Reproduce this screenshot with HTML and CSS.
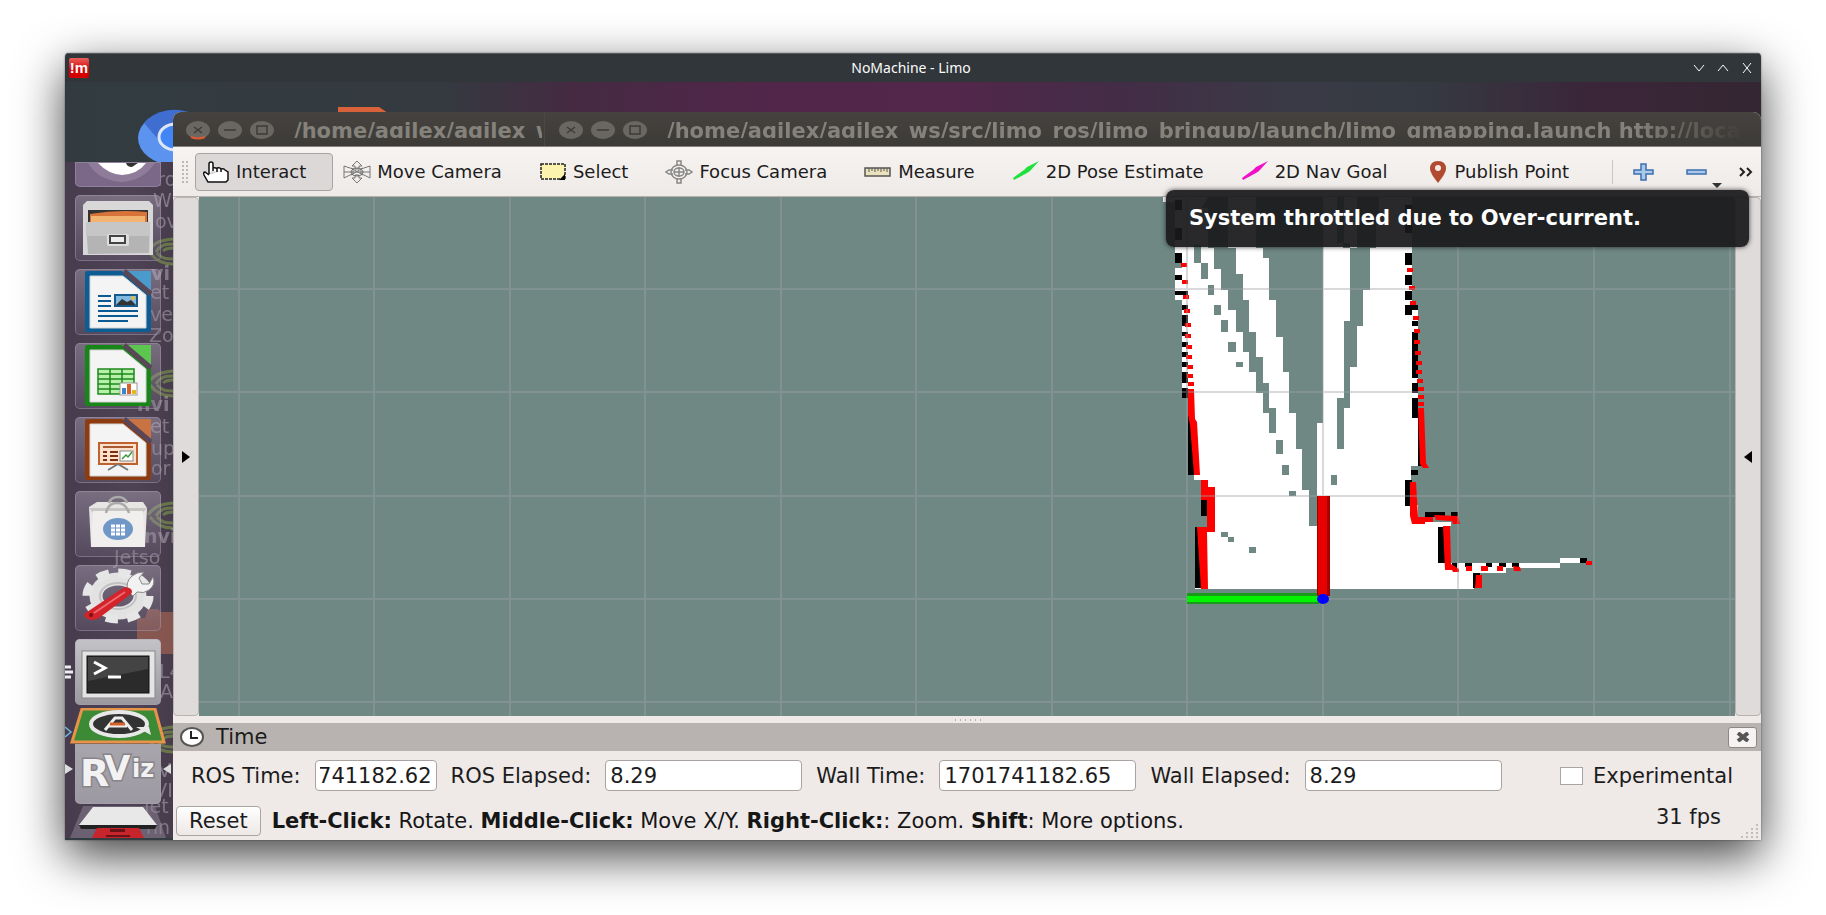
FILE: index.html
```html
<!DOCTYPE html>
<html lang="en">
<head>
<meta charset="utf-8">
<title>NoMachine - Limo</title>
<link rel="stylesheet" href="styles.css">
</head>
<body>
<main class="window">
  <header class="titlebar">
    <span class="logo">!m</span>
    <h1 class="titlebar-text">NoMachine - Limo</h1>
    <div class="controls">
      <button class="control" aria-label="Minimize"><svg width="12" height="12"><path d="M1 3l5 6 5-6"/></svg></button>
      <button class="control" aria-label="Maximize"><svg width="12" height="12"><path d="M1 9l5-6 5 6"/></svg></button>
      <button class="control" aria-label="Close"><svg width="12" height="12"><path d="M2 1l8 10M10 1L2 11"/></svg></button>
    </div>
  </header>

  <div class="desktop">
    <svg class="desktop-icons" width="340" height="80" viewBox="65 82 340 80" aria-hidden="true">
      <ellipse cx="174" cy="138" rx="36" ry="27" fill="#5b93ee"/>
      <path d="M144 123a36 27 0 0 1 50-9l-8 10-22 22z" fill="#3f6dd0"/>
      <ellipse cx="176" cy="137" rx="17" ry="13" fill="#4285f4" stroke="#dce6f5" stroke-width="3"/>
      <path d="M338 107h41l9 6h-50z" fill="#d9623a"/>
    </svg>

    <nav class="launcher" aria-label="Launcher">
      <svg class="ghosts" width="108" height="676" viewBox="65 162 108 676" aria-hidden="true">
        <g id="eye" fill="none" stroke="#7f9b4c" stroke-width="3" opacity=".6">
          <path id="nv" d="M148 251c6-9 14-11 25-12M150 253c6 8 14 11 23 11M156 252c4-7 9-8 17-8M157 253c5 6 10 6 16 6M163 251c3-3 6-3 10-3"/>
          <use href="#nv" y="132"/><use href="#nv" y="264"/><use href="#nv" y="488"/>
        </g>
        <path d="M137 618v36h36v-42h-12l-3-3h-10l-3 9z" fill="#a86450" opacity=".65"/>
        <g class="ghost-text">
          <text x="132" y="186">Chro</text><text x="153" y="207">W</text><text x="155" y="228">ov</text>
          <text x="151" y="280" font-weight="bold">vi</text><text x="150" y="299">et</text><text x="150" y="321">ve</text><text x="149" y="342">Zo</text>
          <text x="137" y="411" font-weight="bold">nvi</text><text x="150" y="433">et</text><text x="151" y="455">up</text><text x="151" y="475">or</text>
          <text x="144" y="543" font-weight="bold">nvi</text><text x="114" y="564">Jetso</text><text x="159" y="678">L4</text><text x="160" y="698">A</text>
          <text x="158" y="777">VI</text><text x="140" y="797">NVI</text><text x="144" y="813">Jet</text><text x="146" y="834">nn</text>
        </g>
      </svg>
      <button class="launch launch-top" aria-label="Dash"><svg width="86" height="23" viewBox="75 162 86 23"><path d="M88 162q10 17 33 19 22-1 34-19z" fill="#8f7c9a"/><path d="M98 162q10 11 24 12 16-1 24-12z" fill="#fff"/><path d="M126 162q1 4 6 4l6-4z" fill="#333"/></svg></button>
      <button class="launch" aria-label="Files"><svg width="86" height="66" viewBox="75 194 86 66">
        <path d="M83 204l4-4h62l4 4v50h-70z" fill="#d8d8d8"/><path d="M88 209h60v14H88z" fill="#333"/><path d="M90 213q28-5 57-2v11H90z" fill="#d8733a"/><path d="M91 215h54v7H91z" fill="#f2b472"/>
        <path d="M86 221h64l-1 31-61 1z" fill="#b4b4b4"/><path d="M86 221h64v14H86z" fill="#c6c6c6"/><rect x="107" y="233" width="22" height="12" rx="2" fill="#ddd"/><rect x="110" y="235" width="15" height="7" fill="#eee" stroke="#444" stroke-width="2"/></svg></button>
      <button class="launch" aria-label="Writer"><svg width="86" height="66" viewBox="75 268 86 66">
        <rect x="85" y="270" width="66" height="61" rx="2" fill="#0d5c93"/><path d="M122 270h29v23z" fill="#4a9acb"/><path d="M124 270l27 23" stroke="#594657" stroke-width="5"/>
        <path d="M90 275h33l23 19v33H90z" fill="#f4f4f4" stroke="#d2d2d2"/>
        <path d="M98 295h13M98 300h13M98 305h13M98 310h40M98 315h40M98 320h30" stroke="#0b5a91" stroke-width="2"/><rect x="115" y="294" width="22" height="11" fill="#7fb9e2" stroke="#155a8b" stroke-width="2"/><path d="M116 304l6-6 5 3 4-2 5 5z" fill="#333"/><circle cx="133" cy="297" r="2" fill="#e9b83d"/></svg></button>
      <button class="launch" aria-label="Calc"><svg width="86" height="66" viewBox="75 343 86 66">
        <rect x="85" y="345" width="66" height="61" rx="2" fill="#188518"/><path d="M122 345h29v23z" fill="#5cc650"/><path d="M124 345l27 23" stroke="#594657" stroke-width="5"/>
        <path d="M90 350h33l23 19v33H90z" fill="#f4f4f4" stroke="#d2d2d2"/>
        <path d="M98 369h36v25H98zM98 374h36M98 379h36M98 384h36M98 389h36M110 369v25M122 369v25" fill="#b8efa9" stroke="#1b8a1b" stroke-width="1.5"/><rect x="120" y="383" width="17" height="12" fill="#fff" stroke="#999"/><path d="M122 388h4v6h-4z" fill="#3a86c8"/><path d="M127 384h4v10h-4z" fill="#d8612a"/><path d="M132 390h4v4h-4z" fill="#e9b520"/></svg></button>
      <button class="launch" aria-label="Impress"><svg width="86" height="66" viewBox="75 417 86 66">
        <rect x="85" y="419" width="66" height="61" rx="2" fill="#8f3b10"/><path d="M122 419h29v23z" fill="#c97343"/><path d="M124 419l27 23" stroke="#594657" stroke-width="5"/>
        <path d="M90 424h33l23 19v33H90z" fill="#f4f4f4" stroke="#d2d2d2"/>
        <rect x="99" y="443" width="38" height="21" fill="#fbe0cc" stroke="#c0622d" stroke-width="2"/><path d="M103 447h30" stroke="#a85a30" stroke-width="2"/><path d="M103 452h4M103 456h4M103 460h4M110 452h8M110 456h8M110 460h8" stroke="#7a3010" stroke-width="2"/><rect x="120" y="451" width="13" height="10" fill="#fff" stroke="#888"/><path d="M122 459l4-4 2 2 4-5" fill="none" stroke="#3a9a3a" stroke-width="1.5"/><path d="M118 464l-10 6M118 464l10 6" stroke="#777" stroke-width="2"/></svg></button>
      <button class="launch" aria-label="Software"><svg width="86" height="66" viewBox="75 491 86 66">
        <path d="M89 507l8-5h46l4 6-2 39H91z" fill="#e8e6e4"/><path d="M89 508h58l-4 5H93z" fill="#c9c6c4"/><path d="M91 547l2-36h50l2 36z" fill="#f0efed"/><path d="M106 513q2-10 11-10t12 10M109 503q2-6 9-6t9 6" fill="none" stroke="#aaa" stroke-width="2.5"/><ellipse cx="118" cy="529" rx="15" ry="11" fill="#6f97c8"/><path d="M111 526h14M111 530h14M111 534h14" stroke="#fff" stroke-width="3" stroke-dasharray="4 1"/></svg></button>
      <button class="launch" aria-label="Settings"><svg width="86" height="66" viewBox="75 566 86 66">
        <ellipse cx="118" cy="597" rx="22" ry="17" fill="none" stroke="#e2e2e2" stroke-width="13"/><ellipse cx="118" cy="597" rx="31" ry="23" fill="none" stroke="#e6e6e6" stroke-width="9" stroke-dasharray="12 9.300"/><ellipse cx="118" cy="597" rx="18" ry="13" fill="none" stroke="#c2c2c2" stroke-width="2"/>
        <path d="M128 592q-3-9 4-15 5-4 12-4l-5 6 3 6h7l4-7q3 8-4 13-5 4-12 2l-4 4z" fill="#f2f2f2" stroke="#888"/><path d="M87 613l36-24q4-2 8 1 2 3 0 5l-32 24q-7 4-13 0-4-4 1-6z" fill="#d3232b"/><path d="M94 614l31-21" stroke="#ee6a6e" stroke-width="2"/><circle cx="91" cy="616" r="2" fill="#7a1014"/></svg></button>
      <button class="launch launch-lit" aria-label="Terminal"><svg width="86" height="66" viewBox="75 640 86 66">
        <rect x="82" y="652" width="73" height="47" fill="#e4e4e4" stroke="#888"/><rect x="87" y="657" width="62" height="37" fill="#2b2b2b" stroke="#111"/><path d="M88 658h60v12l-60 12z" fill="#444"/><path d="M94 663l11 6-11 6" fill="none" stroke="#fff" stroke-width="3"/><path d="M108 678h13" stroke="#fff" stroke-width="3"/></svg></button>
      <button class="launch launch-fold" aria-label="Updater"><svg width="96" height="36" viewBox="70 708 96 36">
        <path d="M82 709h73l9 33H72z" fill="#3c8a35" stroke="#e8934a" stroke-width="3"/><ellipse cx="119" cy="724" rx="28" ry="12" fill="#333" stroke="#e8e8e8" stroke-width="4"/><path d="M105 730l10-12h7l10 12M108 726h19" fill="none" stroke="#eee" stroke-width="3"/><path d="M110 724h15" stroke="#d8612a" stroke-width="3"/><path d="M136 727l13 0 2 8z" fill="#e8e8e8"/></svg></button>
      <button class="launch launch-rviz" aria-label="RViz">
        <svg width="86" height="60" viewBox="75 743 86 60"><g class="rviz-word"><text x="80" y="785" font-size="38">R</text><text x="104" y="779" font-size="34">V</text><text x="132" y="776" font-size="24">iz</text></g></svg></button>
      <button class="launch launch-last" aria-label="Devices"><svg width="96" height="34" viewBox="70 804 96 34">
        <path d="M83 806h72l11 32H70z" fill="#8d8494" opacity=".5"/><path d="M93 807h50l14 18H79z" fill="#e8e8e8"/><path d="M79 825h78l-2 4H81z" fill="#222"/><path d="M97 828h42l5 10H92z" fill="#c8242b"/><path d="M110 829h15v3h-15zM106 835h24v2h-24z" fill="#6b1216"/></svg></button>
      <svg class="pips" width="108" height="130" viewBox="65 660 108 130" aria-hidden="true"><path d="M65 667h6M65 672h8M65 677h6" stroke="#eee" stroke-width="3"/><path d="M65 727l6 5-6 5" fill="none" stroke="#6fb6dd" stroke-width="1.500"/><path d="M65 764l8 5-8 5zM171 764l-8 5 8 5z" fill="#ddd"/></svg>
    </nav>

    <section class="rviz">
      <header class="rviz-titles">
        <div class="rviz-tab rviz-tab-back">
          <svg width="90" height="20" class="dots"><use href="#winbtns"/><path d="M5 17q7 3 14 0" stroke="#dd5a30" stroke-width="2" fill="none"/></svg>
          <span class="rviz-path">/home/agilex/agilex_ws/src</span>
        </div>
        <div class="rviz-tab rviz-tab-front">
          <svg width="90" height="20" class="dots"><g id="winbtns"><g fill="#6a6762"><ellipse cx="12" cy="10" rx="12" ry="9"/><ellipse cx="44" cy="10" rx="12" ry="9"/><ellipse cx="76" cy="10" rx="12" ry="9"/></g><path d="M8 7l8 6M16 7l-8 6M38 10h12M71 6h10v8h-10z" stroke="#3d3b38" stroke-width="1.500" fill="none"/></g></svg>
          <span class="rviz-path">/home/agilex/agilex_ws/src/limo_ros/limo_bringup/launch/limo_gmapping.launch http://localhost</span>
        </div>
      </header>

      <div class="toolbar">
        <span class="grip"></span>
        <button class="tool tool-on"><svg width="28" height="24"><path d="M7 14V4q0-2 2-2t2 2v6M11 11V8q3-1 4 1v3M15 11V8q3-1 4 1v3M19 11V9q3-1 4 1l3 2v8l-2 2H6l-4-7q-1-3 1-3l4 3" fill="#fff" stroke="#111" stroke-width="1.500"/></svg>Interact</button>
        <button class="tool"><svg width="28" height="24"><path d="M14 1l5 5h-3v3h-4V6H9zM14 23l5-5h-3v-3h-4v3H9zM1 6l6 2 3 1v5l-3 1-6 3V6zM27 6l-6 2-3 1v5l3 1 6 3V6zM1 12h26M8 8l12 7M8 15l12-7" fill="none" stroke="#777"/><ellipse cx="14" cy="12" rx="6" ry="4" fill="none" stroke="#666"/></svg>Move Camera</button>
        <button class="tool"><svg width="28" height="24"><rect x="2" y="4" width="24" height="15" fill="#fbf3ae" stroke="#222" stroke-width="1.500" stroke-dasharray="3 1"/><path d="M26 14v6h-6z"/></svg>Select</button>
        <button class="tool"><svg width="28" height="24" fill="none" stroke="#888" stroke-width="1.500"><path d="M12 6V1h4v5M12 18v5h4v-5M8 10H4l-3 2 3 2h4M20 10h4l3 2-3 2h-4"/><ellipse cx="14" cy="12" rx="8" ry="7"/><ellipse cx="14" cy="12" rx="5" ry="4"/><path d="M9 12h10M14 7v10"/></svg>Focus Camera</button>
        <button class="tool"><svg width="28" height="24"><rect x="1" y="8" width="25" height="8" fill="#e9e2bc" stroke="#555" stroke-width="1.500"/><path d="M5 8v4M8 8v3M11 8v4M14 8v3M17 8v4M20 8v3M23 8v4" stroke="#555"/></svg>Measure</button>
        <button class="tool"><svg width="28" height="24" fill="#1fe03c"><path d="M1 18l11-8 3-3 12-6-9 10-3 2-13 7z"/></svg>2D Pose Estimate</button>
        <button class="tool"><svg width="28" height="24" fill="#f010c8"><path d="M1 18l11-8 3-3 12-6-9 10-3 2-13 7z"/></svg>2D Nav Goal</button>
        <button class="tool tool-pin"><svg width="24" height="24"><path d="M13 1q8 0 8 8 0 4-8 14Q5 13 5 9q0-8 8-8z" fill="#b04a30"/><circle cx="13" cy="8" r="3" fill="#f6e9e4"/></svg>Publish Point</button>
        <div class="tool-end">
          <button class="mini" aria-label="Add tool"><svg width="22" height="20"><path d="M8 2h5v6h7v4h-7v6H8v-6H1V8h7z" fill="#a9c8ea" stroke="#3c6fae" stroke-width="1.500"/></svg></button>
          <button class="mini mini-menu" aria-label="Remove tool"><svg width="22" height="20"><path d="M1 8h19v4H1z" fill="#a9c8ea" stroke="#3c6fae" stroke-width="1.500"/></svg></button>
          <button class="mini mini-more" aria-label="More tools"><svg width="14" height="12"><path d="M1 2l4 4-4 4M8 2l4 4-4 4" fill="none" stroke="#222" stroke-width="2"/></svg></button>
        </div>
      </div>

      <div class="view">
        <button class="handle" aria-label="Toggle left panel"><svg width="10" height="12"><path d="M1 0l8 6-8 6z"/></svg></button>
        <svg class="map" viewBox="199 197 1536 519" preserveAspectRatio="xMidYMid slice" role="img" aria-label="Occupancy map">
          <path fill="#fff" d="M1163 197h249v108h6v161h-7v39h7v17h33v4h-6v37h61v10h-32v16H1195v-62h6v-47h-7v-5h-6v-77h-6v-98h-7v-53h-12zM1500 563h60v-5h22v5h-22v5h-60z"/>
          <g fill="#6f8884">
            <path d="M1163 202h12v96h-12zM1175 263h7v5h-7z"/>
            <path d="M1256 197v51h7v10h6v42h7v37h7v35h6v41h7v36h6v41h7v36h8V423h6V197z"/>
            <path d="M1208 197h20v51h8v26h7v26h6v32h7v25h7v26h6v25h7v25h-7v-20h-6v-20h-7v-21h-7v-20h-6v-20h-7v-22h-8v-20h-7v-21h-7v-21h-6v-40h-6z"/>
            <path d="M1350 248h-7v-5h-6v-46h7v46h6zM1357 197h22v23h-3v28h-6v42h-7v36h-6v41h-7v41h-6v41h-7v-51h7v-77h6v-73h7z"/>
            <path d="M1194 245h7v18h-7zM1201 263h7v16h-7zM1208 285h6v10h-6zM1214 305h7v10h-7zM1221 320h7v12h-7zM1228 342h8v10h-8zM1236 362h7v5h-7zM1276 440h7v14h-7zM1282 465h7v10h-7zM1289 491h7v5h-7zM1331 475h6v10h-6zM1221 532h7v5h-7zM1228 537h6v5h-6zM1249 547h7v6h-7z"/>
            <path d="M1418 305v-5h20v5zM1201 516h7v11h-7z"/>
          </g>
          <path fill="#000" d="M1175 200h7v10h-7zM1175 228h7v12h-7zM1175 253h7v10h-7zM1175 275h7v5h-7zM1175 291h13v4h-13zM1182 305h6v5h-6zM1182 315h6v11h-6zM1182 332h6v4h-6zM1182 342h6v5h-6zM1182 352h6v5h-6zM1182 362h6v5h-6zM1182 372h6v11h-6zM1182 388h6v10h-6zM1188 414h6v61h-6zM1201 484h7v32h-7zM1195 527h6v61h-6z
            M1405 205h7v28h-7zM1405 253h7v12h-7zM1405 275h7v10h-7zM1405 291h7v9h-7zM1405 305h13v5h-6v5h-7zM1412 321h6v5h-6zM1412 332h6v46h-6zM1412 383h6v10h-6zM1412 398h6v20h-6zM1418 412h4v54h-4zM1411 470h7v5h-7zM1405 480h7v26h-7zM1425 512h20v5h-20zM1451 512h7v5h-7zM1438 527h7v36h-7zM1452 563h5v5h-5zM1465 563h7v4h-7zM1486 563h6v4h-6zM1499 563h7v4h-7zM1512 563h7v4h-7zM1473 573h7v15h-7zM1580 558h7v5h-7z"/>
          <g fill="#f00">
            <path id="dot" d="M1181 263h6v4h-6z"/><use href="#dot" x="1" y="17"/><use href="#dot" x="2" y="32"/><use href="#dot" x="3" y="46"/><use href="#dot" x="4" y="60"/><use href="#dot" x="4" y="71"/><use href="#dot" x="5" y="82"/><use href="#dot" x="5" y="92"/><use href="#dot" x="6" y="102"/><use href="#dot" x="6" y="111"/><use href="#dot" x="7" y="119"/>
            <use href="#dot" x="226" y="5"/><use href="#dot" x="228" y="23"/><use href="#dot" x="229" y="38"/><use href="#dot" x="232" y="53"/><use href="#dot" x="233" y="66"/><use href="#dot" x="233" y="77"/><use href="#dot" x="234" y="88"/><use href="#dot" x="235" y="98"/><use href="#dot" x="235" y="107"/><use href="#dot" x="236" y="116"/><use href="#dot" x="237" y="124"/><use href="#dot" x="237" y="132"/><use href="#dot" x="237" y="139"/>
            <path d="M1188 389h6l1 30 2 3 3 53h-6l-4-50-2-10zM1201 480h7v7h7v45h-8l1 57h-7l-4-62h10v-27h-6v-15zM1418 408h6l2 55 3 5h-6l-3-4zM1410 482h6l2 35h15v5h-8v2h-13l-2-8zM1434 515l24 1 2 8h-7l-1-3-16-1zM1443 526h7l1 38 8 5v3h-6l-1-2h-7zM1466 566h6v5h-6zM1481 566h7v5h-7zM1497 566h6v5h-6zM1513 566l7 1 1 4h-7zM1476 575h6v13h-7zM1586 561h6v4h-6z"/>
          </g>
          <path d="M239 197v519M374 197v519M510 197v519M645 197v519M781 197v519M916 197v519M1052 197v519M1187 197v519M1323 197v519M1458 197v519M1594 197v519M1730 197v519M199 289h1536M199 392h1536M199 496h1536M199 599h1536M199 702h1536" fill="none" stroke="#a09fa4" stroke-opacity=".4" stroke-width="2"/>
          <path d="M1187 593h132v11h-132z" fill="#1a9a1a"/><path d="M1187 596h132v6h-132z" fill="#00f400"/>
          <path d="M1317 496h13v100h-13z" fill="#a50000"/><path d="M1318 496h9v100h-9z" fill="#e80000"/>
          <ellipse cx="1323" cy="599" rx="6" ry="5" fill="#00f"/>
        </svg>
        <button class="handle" aria-label="Toggle right panel"><svg width="10" height="12"><path d="M9 0L1 6l8 6z"/></svg></button>
      </div>
      <div class="splitter"><span></span></div>

      <header class="dock-head">
        <svg width="24" height="22"><ellipse cx="12" cy="11" rx="11" ry="9" fill="#fff" stroke="#555" stroke-width="2"/><path d="M11 5v7h7" fill="none" stroke="#222" stroke-width="2"/></svg>
        <h2 class="dock-title">Time</h2>
        <button class="dock-close" aria-label="Close Time panel"><svg width="14" height="10"><path d="M2 1l10 8M12 1L2 9" stroke="#555" stroke-width="4"/></svg></button>
      </header>
      <form class="times">
        <label for="ros-time">ROS Time:</label><input id="ros-time" class="field field-short" dir="rtl" value="1701741182.62">
        <label for="ros-elapsed">ROS Elapsed:</label><input id="ros-elapsed" class="field" value="8.29">
        <label for="wall-time">Wall Time:</label><input id="wall-time" class="field" value="1701741182.65">
        <label for="wall-elapsed">Wall Elapsed:</label><input id="wall-elapsed" class="field" value="8.29">
        <label class="check"><input type="checkbox" class="box">Experimental</label>
      </form>
      <footer class="status">
        <button class="reset">Reset</button>
        <p class="help"><b>Left-Click:</b> Rotate. <b>Middle-Click:</b> Move X/Y. <b>Right-Click:</b>: Zoom. <b>Shift</b>: More options.</p>
        <span class="fps">31 fps</span>
        <svg class="size-grip" width="18" height="14" fill="#c2bdbb"><path d="M15 0h2v2h-2zM10 4h2v2h-2zM15 4h2v2h-2zM5 8h2v2H5zM10 8h2v2h-2zM15 8h2v2h-2zM0 12h2v2H0zM5 12h2v2H5zM10 12h2v2h-2zM15 12h2v2h-2z"/></svg>
      </footer>
    </section>

    <div class="toast" role="status">System throttled due to Over-current.</div>
  </div>
</main>
</body>
</html>
```

FILE: styles.css
```css
* { box-sizing: border-box; }

body {
  margin: 0;
  min-height: 100vh;
  padding: 53px 65px 77px;
  display: flex;
  background: #fff;
  font-family: "DejaVu Sans", sans-serif;
  font-size: 21px;
  line-height: 24px;
  color: #1c1c1c;
}

button, input { font: inherit; color: inherit; margin: 0; }
button { border: 0; background: none; padding: 0; }
svg { display: block; flex: none; }

.window {
  flex: 1;
  min-width: 0;
  display: flex;
  flex-direction: column;
  border-radius: 4px 4px 0 0;
  overflow: hidden;
  box-shadow: 0 16px 48px rgba(0, 0, 0, .75), 0 0 2px rgba(0, 0, 0, .5);
}

.titlebar {
  display: grid;
  grid-template-columns: 1fr auto 1fr;
  align-items: center;
  height: 29px;
  padding: 0 8px 0 4px;
  background: #31363b;
  box-shadow: inset 0 1px #55595d;
  color: #fcfcfc;
}
.logo {
  width: 20px;
  height: 20px;
  border-radius: 2px;
  background: linear-gradient(#e8605c, #d40000 60%);
  font: bold 15px/19px "Liberation Sans", sans-serif;
  text-align: center;
}
.titlebar-text { margin: 0; font: 14px/20px "Noto Sans", sans-serif; }
.controls { display: flex; gap: 12px; justify-content: flex-end; }
.control svg { fill: none; stroke: #fcfcfc; }

.desktop {
  flex: 1;
  position: relative;
  display: grid;
  grid-template-columns: 108px minmax(0, 1fr);
  background: linear-gradient(90deg, #323c40 0%, #343a40 22%, #452a42 30%, #52264a 42%, #53274b 52%, #432c46 62%, #3a3a46 72%, #353a42 80%, #3b2539 90%, #342632 100%);
}
.desktop-icons { position: absolute; left: 0; top: 0; }

.launcher {
  position: relative;
  margin-top: 80px;
  padding: 0 6px 0 4px;
  display: flex;
  flex-direction: column;
  align-items: center;
  gap: 8px;
  height: 676px;
  overflow: hidden;
  background: linear-gradient(90deg, #463c4e, #4d4354 60%, #463c4c);
}
.launch {
  width: 86px;
  height: 66px;
  flex: none;
  position: relative;
  border-radius: 5px;
  background: linear-gradient(rgba(190, 180, 200, .4), rgba(120, 105, 130, .25));
  box-shadow: inset 0 0 0 1px rgba(170, 160, 180, .45);
}
.launch-top { height: 25px; border-radius: 0 0 5px 5px; background: #7b6888; }
.launch-lit { background: linear-gradient(#c4c4c8, #9a989e); }
.launch-fold { width: 96px; height: 36px; margin-top: -5px; background: none; box-shadow: none; }
.launch-rviz { height: 60px; margin-top: -8px; border-radius: 0 0 5px 5px; background: linear-gradient(#a8a5ac, #9d99a2); }
.launch-last { width: 96px; height: 34px; margin-top: -8px; background: none; box-shadow: none; }
.rviz-word { font-weight: bold; fill: #f2f2f2; stroke: #88848c; stroke-width: 3px; paint-order: stroke; }
.ghosts, .pips { position: absolute; left: 0; top: 0; }
.pips { top: 498px; }
.ghost-text { font-size: 19px; fill: #b9b0bd; opacity: .5; }

.rviz {
  margin-top: 30px;
  position: relative;
  min-width: 0;
  display: flex;
  flex-direction: column;
  background: #efeae8;
  border-radius: 8px 8px 0 0;
}
.rviz-titles {
  display: flex;
  height: 35px;
  padding-left: 13px;
  border-radius: 8px 8px 0 0;
  background: linear-gradient(#45423f, #3d3b38);
  border-bottom: 1px solid #88817d;
}
.rviz-tab {
  display: flex;
  align-items: flex-start;
  gap: 18px;
  padding-top: 8px;
  min-width: 0;
}
.rviz-tab-back { flex: 0 0 358px; padding-right: 0; }
.rviz-tab-back .rviz-path { margin-right: 2px; }
.rviz-tab-front {
  flex: 1;
  padding-left: 14px;
  padding-right: 18px;
  border-left: 1px solid #4b4845;
}
.rviz-path {
  min-width: 0;
  height: 18px;
  overflow: hidden;
  white-space: nowrap;
  font-weight: bold;
  line-height: 22px;
  color: #85817b;
}
.rviz-tab-front .rviz-path {
  flex: 1;
  -webkit-mask-image: linear-gradient(90deg, #000 90%, transparent);
  mask-image: linear-gradient(90deg, #000 90%, transparent);
}

.toolbar {
  display: flex;
  align-items: center;
  gap: 3px;
  height: 50px;
  padding: 5px 8px;
  background: linear-gradient(#f7f3f1, #eeeae8);
  border-bottom: 1px solid #b5b0ad;
  font-size: 18px;
  white-space: nowrap;
}
.grip {
  width: 8px;
  height: 24px;
  margin-right: 3px;
  background: radial-gradient(circle, #bdb8b5 1px, transparent 1px) 0 0 / 4px 4px;
}
.tool {
  display: flex;
  align-items: center;
  gap: 6px;
  height: 38px;
  padding: 0 26px 0 6px;
  border: 1px solid transparent;
  border-radius: 4px;
}
.tool-on { background: #dcd8d7; border-color: #a9a4a1; }
.tool-pin { padding-right: 0; }
.tool-end {
  margin-left: auto;
  display: flex;
  align-items: center;
  height: 24px;
  padding-left: 20px;
  gap: 31px;
  border-left: 1px solid #cbc6c3;
}
.mini-menu { position: relative; }
.mini-menu::after {
  content: "";
  position: absolute;
  right: -14px;
  bottom: -6px;
  border: 5px solid transparent;
  border-top-color: #333;
  border-bottom: 0;
}

.view { flex: 1; min-height: 0; display: flex; }
.handle {
  width: 26px;
  display: flex;
  align-items: center;
  justify-content: center;
  background: #dfdbda;
  border: 1px solid #b9b4b2;
  border-radius: 4px;
}
.map { flex: 1 1 0; width: 0; min-width: 0; height: auto; background: #6f8884; }

.splitter { display: flex; justify-content: center; align-items: center; height: 7px; }
.splitter span {
  width: 28px;
  height: 4px;
  background: radial-gradient(circle, #b5b0ad 1px, transparent 1px) 0 0 / 5px 4px;
}

.dock-head {
  display: flex;
  align-items: center;
  gap: 12px;
  height: 28px;
  padding: 0 4px 0 7px;
  background: #b8b3b0;
}
.dock-title { margin: 0; font-size: 21px; font-weight: normal; }
.dock-close {
  margin-left: auto;
  width: 29px;
  height: 21px;
  display: grid;
  place-items: center;
  background: #f5f2f1;
  border: 1px solid #8d8885;
  border-radius: 3px;
}

.times {
  display: flex;
  align-items: center;
  gap: 14px;
  padding: 9px 28px 0 18px;
  white-space: nowrap;
}
.field {
  flex: 0 1 197px;
  min-width: 0;
  height: 31px;
  padding: 0 4px;
  border: 1px solid #a9a4a1;
  border-radius: 4px;
  background: #fff;
}
.field-short { flex: 0 0 122px; }
.check { display: flex; align-items: center; gap: 10px; margin-left: auto; }
.box {
  appearance: none;
  width: 23px;
  height: 18px;
  border: 1px solid #aaa5a3;
  background: #fff;
}

.status {
  position: relative;
  display: flex;
  align-items: center;
  gap: 11px;
  padding: 14px 40px 3px 3px;
  white-space: nowrap;
}
.reset {
  height: 30px;
  padding: 0 12px;
  border: 1px solid #aaa5a3;
  border-radius: 4px;
  background: linear-gradient(#fff, #ece8e6);
}
.help { margin: 0; color: #161616; }
.fps { margin-left: auto; padding-bottom: 8px; }
.size-grip { position: absolute; right: 2px; bottom: 2px; }

.toast {
  position: absolute;
  top: 108px;
  right: 12px;
  width: 583px;
  height: 57px;
  padding: 0 23px;
  border-radius: 8px;
  background: rgba(25, 25, 27, .93);
  box-shadow: 0 0 5px rgba(0, 0, 0, .7);
  color: #fff;
  font-weight: bold;
  line-height: 57px;
  white-space: nowrap;
}
```
